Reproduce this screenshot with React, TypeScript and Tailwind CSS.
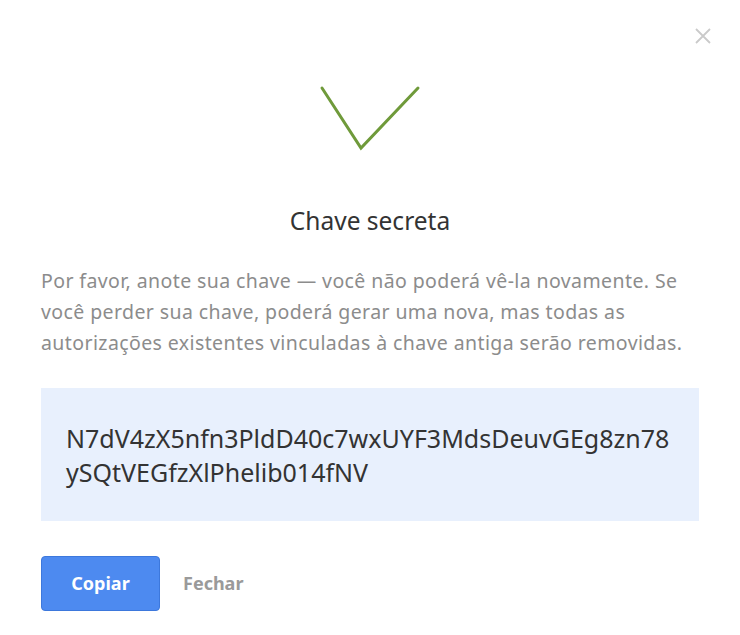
import React from "react";

export default function App() {
  return (
    <div className="relative w-[740px] h-[635px] bg-white" style={{ fontFamily: '"Noto Sans", "Open Sans", sans-serif' }}>
      <button className="absolute right-[28px] top-[27px] text-[#cacaca]">
        <svg width="18" height="18" viewBox="0 0 18 18" fill="none" stroke="currentColor" strokeWidth="1.8">
          <path d="M2 2L16 16M16 2L2 16" />
        </svg>
      </button>
      <div className="flex flex-col px-[41px] pt-[85px]">
        <div className="flex justify-center">
          <svg width="102" height="66" viewBox="0 0 102 66" fill="none" stroke="#6f9a3a" strokeWidth="3">
            <path d="M3 3L42 63L99 3" strokeLinecap="round" />
          </svg>
        </div>
        <h2 className="mt-[55px] text-center text-[24.5px] text-[#333] leading-[30px]">Chave secreta</h2>
        <p className="mt-[29px] text-[19.5px] leading-[31px] tracking-[0.4px] text-[#8c8c8c] whitespace-nowrap">
          Por favor, anote sua chave — você não poderá vê-la novamente. Se
          <br />
          você perder sua chave, poderá gerar uma nova, mas todas as
          <br />
          autorizações existentes vinculadas à chave antiga serão removidas.
        </p>
        <div className="mt-[30px] h-[133px] bg-[#e8f0fd] px-[25px] pt-[33px]">
          <div className="text-[25px] leading-[34px] text-[#333] whitespace-nowrap">
            N7dV4zX5nfn3PldD40c7wxUYF3MdsDeuvGEg8zn78
            <br />
            ySQtVEGfzXlPhelib014fNV
          </div>
        </div>
        <div className="mt-[35px] flex items-center gap-[23px]">
          <button className="w-[119px] h-[55px] rounded-[4px] bg-[#4d8af0] border border-[#3d78dc] text-white font-bold text-[18px]">Copiar</button>
          <button className="text-[#9a9a9a] font-bold text-[18px]">Fechar</button>
        </div>
      </div>
    </div>
  );
}
